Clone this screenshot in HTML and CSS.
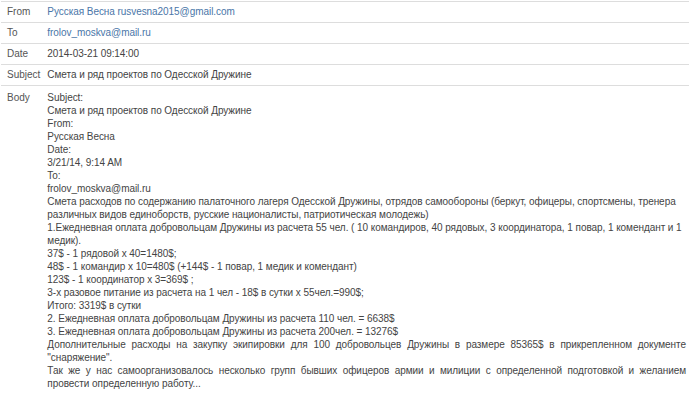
FILE: index.html
```html
<!DOCTYPE html>
<html lang="ru">
<head>
<meta charset="utf-8">
<link rel="stylesheet" href="styles.css">
</head>
<body>
<table class="mail">
  <tr class="row"><td class="label">From</td><td class="value link">Русская Весна rusvesna2015@gmail.com</td></tr>
  <tr class="row"><td class="label">To</td><td class="value link">frolov_moskva@mail.ru</td></tr>
  <tr class="row"><td class="label">Date</td><td class="value">2014-03-21 09:14:00</td></tr>
  <tr class="row"><td class="label">Subject</td><td class="value">Смета и ряд проектов по Одесской Дружине</td></tr>
  <tr class="row body-row"><td class="label">Body</td><td class="value body-text">
    <p class="line">Subject:</p>
    <p class="line">Смета и ряд проектов по Одесской Дружине</p>
    <p class="line">From:</p>
    <p class="line">Русская Весна</p>
    <p class="line">Date:</p>
    <p class="line">3/21/14, 9:14 AM</p>
    <p class="line">To:</p>
    <p class="line">frolov_moskva@mail.ru</p>
    <p class="line">Смета расходов по содержанию палаточного лагеря Одесской Дружины, отрядов самообороны (беркут, офицеры, спортсмены, тренера различных видов единоборств, русские националисты, патриотическая молодежь)</p>
    <p class="line">1.Ежедневная оплата добровольцам Дружины из расчета 55 чел. ( 10 командиров, 40 рядовых, 3 координатора, 1 повар, 1 комендант и 1 медик).</p>
    <p class="line">37$ - 1 рядовой х 40=1480$;</p>
    <p class="line">48$ - 1 командир х 10=480$ (+144$ - 1 повар, 1 медик и комендант)</p>
    <p class="line">123$ - 1 координатор х 3=369$ ;</p>
    <p class="line">3-х разовое питание из расчета на 1 чел - 18$ в сутки х 55чел.=990$;</p>
    <p class="line">Итого: 3319$ в сутки</p>
    <p class="line">2. Ежедневная оплата добровольцам Дружины из расчета 110 чел. = 6638$</p>
    <p class="line">3. Ежедневная оплата добровольцам Дружины из расчета 200чел. = 13276$</p>
    <p class="line justify">Дополнительные расходы на закупку экипировки для 100 добровольцев Дружины в размере 85365$ в прикрепленном документе "снаряжение".</p>
    <p class="line justify">Так же у нас самоорганизовалось несколько групп бывших офицеров армии и милиции с определенной подготовкой и желанием провести определенную работу...</p>
  </td></tr>
</table>
</body>
</html>
```
FILE: styles.css
```css
html, body {
  margin: 0;
  padding: 0;
  background: #ffffff;
}
body {
  font-family: "Liberation Sans", Arial, sans-serif;
  font-size: 10px;
  color: #444444;
  padding: 1px 1px 0 1px;
}
.mail {
  width: 100%;
  border-collapse: collapse;
}
.row td {
  border-top: 1px solid #dddddd;
  padding: 4px 6px 4px 6px;
  line-height: 12px;
  vertical-align: top;
}
.row:nth-child(4) td {
  border-bottom: 1px solid #dddddd;
}
.row td.label {
  width: 29px;
  white-space: nowrap;
  color: #555555;
  padding-right: 7px;
}
.row td.value {
  color: #444444;
  padding-left: 0;
  letter-spacing: -0.06px;
}
.row td.link {
  color: #4a76a8;
}
.body-row td {
  border-top: none;
  padding-top: 5px;
  line-height: 13px;
}
.row td.body-text {
  padding-right: 3px;
}
.line {
  margin: 0;
}
.justify {
  text-align: justify;
}
```
